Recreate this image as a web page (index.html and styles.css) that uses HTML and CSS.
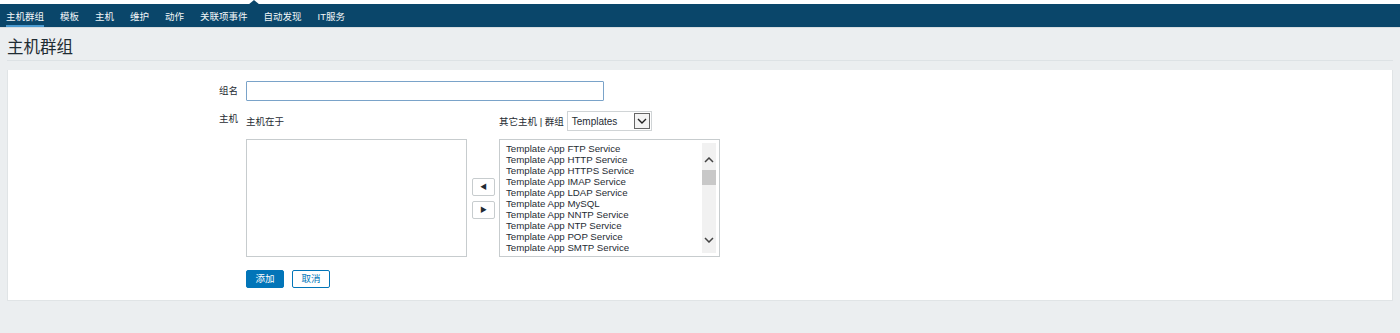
FILE: index.html
```html
<!DOCTYPE html>
<html lang="zh-CN">
<head>
    <meta charset="UTF-8">
    <title>主机群组</title>
    <link rel="stylesheet" href="styles.css">
</head>
<body>
    <header class="topbar">
        <span class="pointer"></span>
        <nav class="menu">
            <a class="active">主机群组</a>
            <a>模板</a>
            <a>主机</a>
            <a>维护</a>
            <a>动作</a>
            <a>关联项事件</a>
            <a>自动发现</a>
            <a>IT服务</a>
        </nav>
    </header>

    <div class="page-header">
        <h1>主机群组</h1>
    </div>

    <main class="container">
        <div class="form-row">
            <label class="form-label">组名</label>
            <div class="form-field">
                <input type="text" class="text-input">
            </div>
        </div>

        <div class="form-row hosts-row">
            <label class="form-label">主机</label>
            <div class="form-field twinbox">
                <div class="twin-head">主机在于</div>
                <div></div>
                <div class="twin-head">
                    <span>其它主机 | 群组</span>
                    <div class="select">
                        <span>Templates</span>
                        <span class="select-btn">
                            <svg width="10" height="6" viewBox="0 0 10 6"><path d="M1 1 L5 5 L9 1" fill="none" stroke="#222" stroke-width="1.4"/></svg>
                        </span>
                    </div>
                </div>

                <div class="listbox"></div>
                <div class="move-buttons">
                    <button class="move-btn">&#9664;</button>
                    <button class="move-btn">&#9654;</button>
                </div>
                <div class="listbox">
                    <div class="list-items">
                        <div>Template App FTP Service</div>
                        <div>Template App HTTP Service</div>
                        <div>Template App HTTPS Service</div>
                        <div>Template App IMAP Service</div>
                        <div>Template App LDAP Service</div>
                        <div>Template App MySQL</div>
                        <div>Template App NNTP Service</div>
                        <div>Template App NTP Service</div>
                        <div>Template App POP Service</div>
                        <div>Template App SMTP Service</div>
                    </div>
                    <div class="scrollbar">
                        <div class="sb-arrow up">
                            <svg width="10" height="6" viewBox="0 0 10 6"><path d="M1 5 L5 1 L9 5" fill="none" stroke="#444" stroke-width="1.5"/></svg>
                        </div>
                        <div class="sb-thumb"></div>
                        <div class="sb-space"></div>
                        <div class="sb-arrow down">
                            <svg width="10" height="6" viewBox="0 0 10 6"><path d="M1 1 L5 5 L9 1" fill="none" stroke="#444" stroke-width="1.5"/></svg>
                        </div>
                    </div>
                </div>
            </div>
        </div>

        <div class="form-row actions-row">
            <div class="form-label"></div>
            <div class="form-field actions">
                <button class="btn btn-primary">添加</button>
                <button class="btn btn-alt">取消</button>
            </div>
        </div>
    </main>
</body>
</html>
```

FILE: styles.css
```css
body {
    margin: 0;
    font-family: "Liberation Sans", Arial, "Noto Sans CJK SC", sans-serif;
    font-size: 9.5px;
    color: #1f2c33;
    background-color: #ebeef0;
}

/* top navigation */
.topbar {
    position: relative;
    background-color: #fff;
    padding-top: 4px;
    border-bottom: 1px solid #d8dde0;
}
.pointer {
    position: absolute;
    left: 248px;
    top: 0;
    width: 0;
    height: 0;
    border-left: 6px solid transparent;
    border-right: 6px solid transparent;
    border-bottom: 5px solid #0a466a;
}
.menu {
    display: flex;
    gap: 16px;
    height: 23px;
    padding-left: 6px;
    background-color: #0a466a;
}
.menu a {
    display: flex;
    align-items: center;
    padding-top: 2px;
    color: #f2f6f8;
    border-bottom: 2px solid transparent;
    box-sizing: border-box;
}
.menu a.active { border-bottom-color: #4a9ad0; }

/* page title */
.page-header {
    margin: 0 7px;
    height: 32px;
    border-bottom: 1px solid #dde2e5;
}
h1 {
    margin: 0;
    padding-top: 9px;
    font-size: 16.5px;
    font-weight: normal;
    line-height: 20px;
    color: #1f2c33;
}

/* form container */
.container {
    margin: 9px 7px 0 7px;
    padding: 11px 0 12px 0;
    background-color: #fff;
    border: 1px solid #e0e4e6;
    border-top: none;
}
.form-row {
    display: flex;
    gap: 8px;
}
.form-label {
    width: 230px;
    flex-shrink: 0;
    text-align: right;
    line-height: 20px;
}
.hosts-row { margin-top: 10px; }
.hosts-row .form-label { line-height: 16px; }

.text-input {
    width: 358px;
    height: 20px;
    box-sizing: border-box;
    margin: 0;
    border: 1px solid #7aa3c9;
    border-radius: 1px;
    font: inherit;
}

/* twin listbox */
.twinbox {
    display: grid;
    grid-template-columns: 221px 32px 221px;
    row-gap: 8px;
}
.twin-head {
    display: flex;
    align-items: center;
    height: 20px;
    white-space: nowrap;
}
.select {
    display: flex;
    align-items: center;
    justify-content: space-between;
    width: 85px;
    height: 20px;
    margin-left: 3px;
    padding: 0 1px 0 4px;
    box-sizing: border-box;
    border: 1px solid #d0d4d6;
    font-size: 10px;
}
.select-btn {
    display: flex;
    align-items: center;
    justify-content: center;
    width: 14px;
    height: 14px;
    border: 1px solid #666;
    background-color: #f4f4f4;
}
.listbox {
    display: flex;
    height: 118px;
    box-sizing: border-box;
    border: 1px solid #c7ccce;
}
.list-items {
    flex: 1;
    padding: 3px 0 0 6px;
    line-height: 11px;
    font-size: 9.7px;
    color: #1f2c33;
}
.scrollbar {
    display: flex;
    flex-direction: column;
    width: 14px;
    margin: 3px 3px 3px 0;
    background-color: #f1f1f1;
}
.sb-arrow {
    display: flex;
    justify-content: center;
}
.sb-arrow.up { height: 27px; align-items: center; padding-top: 6px; box-sizing: border-box; }
.sb-arrow.down { height: 27px; align-items: flex-start; padding-top: 11px; box-sizing: border-box; }
.sb-thumb { height: 15px; background-color: #c8c8c8; }
.sb-space { flex: 1; }

.move-buttons {
    display: flex;
    flex-direction: column;
    align-items: center;
    justify-content: center;
    gap: 5px;
    padding-top: 1px;
}
.move-btn {
    width: 23px;
    height: 18px;
    padding: 0;
    border: 1px solid #c7ccce;
    border-radius: 2px;
    background-color: #fff;
    color: #1f2c33;
    font-size: 7px;
    line-height: 16px;
}

/* actions */
.actions-row { margin-top: 13px; }
.actions { display: flex; gap: 8px; }
.btn {
    width: 38px;
    height: 18px;
    padding: 0;
    border-radius: 2px;
    font: inherit;
    font-size: 9.5px;
    line-height: 16px;
}
.btn-primary {
    background-color: #0275b8;
    border: 1px solid #0275b8;
    color: #fff;
}
.btn-alt {
    background-color: #fff;
    border: 1px solid #0275b8;
    color: #0275b8;
}
```
